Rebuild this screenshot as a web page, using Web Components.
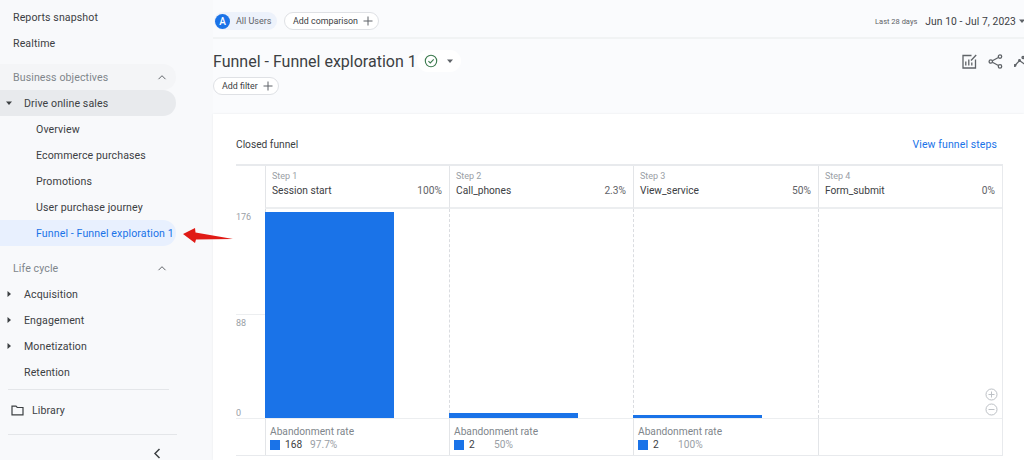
<!DOCTYPE html>
<html>
<head>
<meta charset="utf-8">
<style>
html, body { margin: 0; height: 460px; overflow: hidden; background: #fff; }
body { font-family: Roboto, "Liberation Sans", sans-serif; color: #3c4043; }
</style>
</head>
<body>
<ga-app></ga-app>

<script>
const html = String.raw

const caretDown = html`<svg width="8" height="8" viewBox="0 0 8 8"><path d="M1 2.5h6L4 6z" fill="currentColor"/></svg>`
const caretRight = html`<svg width="8" height="8" viewBox="0 0 8 8"><path d="M2.5 1v6L6 4z" fill="currentColor"/></svg>`
const plus = html`<svg width="10" height="10" viewBox="0 0 10 10"><path d="M5 .5v9M.5 5h9" stroke="#5f6368" stroke-width="1" fill="none"/></svg>`

/**
 * one row of the left menu
 */
class NavItem extends HTMLElement {
	connectedCallback() {
		const caret = this.getAttribute('caret')
		const mark = caret == 'down' ? caretDown : caret == 'right' ? caretRight : ''
		this.attachShadow({ mode: 'open' }).innerHTML = html`
			<style>
				:host {
					display: flex;
					align-items: center;
					height: 26px;
					width: 176px;
					box-sizing: border-box;
					font-size: 10.6px;
					letter-spacing: .1px;
					color: #3c4043;
					border-radius: 0 13px 13px 0;
					white-space: nowrap;
				}
				:host([level="0"]) { padding-left: 13px; }
				:host([level="1"]) { padding-left: 24px; }
				:host([level="2"]) { padding-left: 36px; }
				:host([open]) { background: #e8eaed; }
				:host([active]) { background: #e8f0fe; color: #1a73e8; }
				.caret {
					position: absolute;
					left: 5px;
					display: flex;
					color: #3c4043;
				}
			</style>
			<span class="caret">${mark}</span>
			<slot></slot>
		`
	}
}
customElements.define('nav-item', NavItem);

/**
 * grey section heading with its chevron
 */
class NavHeading extends HTMLElement {
	connectedCallback() {
		this.attachShadow({ mode: 'open' }).innerHTML = html`
			<style>
				:host {
					display: flex;
					align-items: center;
					justify-content: space-between;
					height: 26px;
					width: 176px;
					box-sizing: border-box;
					padding: 0 9px 0 13px;
					font-size: 10.6px;
					letter-spacing: .1px;
					color: #80868b;
					border-radius: 0 13px 13px 0;
				}
				:host([tint]) { background: #f4f5f7; }
				svg { display: block; }
			</style>
			<slot></slot>
			<svg width="10" height="7" viewBox="0 0 10 7"><path d="M1.5 5.2 5 1.7l3.5 3.5" stroke="#5f6368" stroke-width="1" fill="none"/></svg>
		`
	}
}
customElements.define('nav-heading', NavHeading);

class GaSidebar extends HTMLElement {
	constructor() {
		super();
		this.attachShadow({ mode: 'open' }).innerHTML = html`
			<style>
				:host {
					display: flex;
					flex-direction: column;
					width: 213px;
					height: 460px;
					flex: none;
					box-sizing: border-box;
					padding-top: 4px;
					background: #f8f9fb;
					position: relative;
				}
				.gap-a { height: 8px; }
				.gap-b { height: 9px; }
				hr {
					border: 0;
					border-top: 1px solid #e4e6e9;
					margin: 4px 0 0 8px;
					width: 161px;
				}
				.library {
					display: flex;
					align-items: center;
					gap: 8px;
					height: 44px;
					box-sizing: border-box;
					padding: 0 0 4px 11px;
					font-size: 10.6px;
					letter-spacing: .1px;
				}
				.collapse {
					display: flex;
					justify-content: flex-end;
					width: 161px;
					padding-top: 13px;
				}
			</style>
			<nav-item level="0">Reports snapshot</nav-item>
			<nav-item level="0">Realtime</nav-item>
			<div class="gap-a"></div>
			<nav-heading tint>Business objectives</nav-heading>
			<nav-item level="1" caret="down" open>Drive online sales</nav-item>
			<nav-item level="2">Overview</nav-item>
			<nav-item level="2">Ecommerce purchases</nav-item>
			<nav-item level="2">Promotions</nav-item>
			<nav-item level="2">User purchase journey</nav-item>
			<nav-item level="2" active>Funnel - Funnel exploration 1</nav-item>
			<div class="gap-b"></div>
			<nav-heading>Life cycle</nav-heading>
			<nav-item level="1" caret="right">Acquisition</nav-item>
			<nav-item level="1" caret="right">Engagement</nav-item>
			<nav-item level="1" caret="right">Monetization</nav-item>
			<nav-item level="1">Retention</nav-item>
			<hr>
			<div class="library">
				<svg width="13" height="11" viewBox="0 0 13 11"><path d="M1 1.2h4l1.2 1.3H12v7.3H1z" stroke="#3c4043" stroke-width="1.2" fill="none"/></svg>
				<span>Library</span>
			</div>
			<hr style="width:169px;margin-top:0">
			<div class="collapse">
				<svg width="8" height="11" viewBox="0 0 8 11"><path d="M6.5 1 2 5.5 6.5 10" stroke="#3c4043" stroke-width="1.5" fill="none"/></svg>
			</div>
		`
	}
}
customElements.define('ga-sidebar', GaSidebar);

/**
 * rounded outline chip, used for the add buttons
 */
class GaChip extends HTMLElement {
	constructor() {
		super();
		this.attachShadow({ mode: 'open' }).innerHTML = html`
			<style>
				:host {
					display: inline-flex;
					align-items: center;
					gap: 5px;
					height: 18px;
					box-sizing: border-box;
					padding: 0 5px 0 8px;
					border: 1px solid #dfe1e5;
					border-radius: 9px;
					background: #fff;
					font-size: 8.9px;
					color: #3c4043;
					white-space: nowrap;
				}
				svg { display: block; }
			</style>
			<slot></slot>
			${plus}
		`
	}
}
customElements.define('ga-chip', GaChip);

class GaTopbar extends HTMLElement {
	constructor() {
		super();
		this.attachShadow({ mode: 'open' }).innerHTML = html`
			<style>
				:host {
					display: flex;
					align-items: center;
					height: 39px;
					box-sizing: border-box;
					border-bottom: 2px solid #f1f3f4;
					padding: 5px 0 0 1px;
					background: #fafbfd;
				}
				.segment {
					display: flex;
					align-items: center;
					gap: 6px;
					height: 18px;
					width: 63px;
					box-sizing: border-box;
					border-radius: 9px;
					background: #edf2fb;
					font-size: 9px;
					color: #5f6368;
					margin-right: 7px;
				}
				.badge {
					width: 15px;
					height: 15px;
					border-radius: 50%;
					background: #1a73e8;
					color: #fff;
					font-size: 10px;
					font-weight: 500;
					display: flex;
					align-items: center;
					justify-content: center;
					margin-left: 1px;
				}
				.dates {
					margin-left: auto;
					display: flex;
					align-items: center;
					font-size: 10.3px;
					letter-spacing: .08px;
					color: #3c4043;
					white-space: nowrap;
				}
				.dates small {
					font-size: 7.5px;
					letter-spacing: 0;
					color: #5f6368;
					margin-right: 8px;
				}
				.dates svg { margin-left: 2px; margin-right: -2px; display: block; color: #5f6368; }
			</style>
			<div class="segment"><span class="badge">A</span><span>All Users</span></div>
			<ga-chip>Add comparison</ga-chip>
			<div class="dates"><small>Last 28 days</small>Jun 10 - Jul 7, 2023${caretDown}</div>
		`
	}
}
customElements.define('ga-topbar', GaTopbar);

class GaTitle extends HTMLElement {
	constructor() {
		super();
		this.attachShadow({ mode: 'open' }).innerHTML = html`
			<style>
				:host {
					display: block;
					height: 75px;
					box-sizing: border-box;
					background: #fafbfd;
					padding-top: 10px;
				}
				.line {
					display: flex;
					align-items: center;
					height: 24px;
				}
				h1 {
					margin: 0;
					font-size: 16px;
					font-weight: 400;
					color: #3c4043;
					white-space: nowrap;
				}
				.status {
					display: flex;
					align-items: center;
					gap: 8px;
					padding: 0 7px 0 7px;
					height: 22px;
					border-radius: 11px;
					background: #fff;
					color: #5f6368;
				}
				.tools {
					margin-left: auto;
					display: flex;
					align-items: center;
					gap: 11px;
					margin-right: -2px;
				}
				svg { display: block; }
				ga-chip { margin-top: 4px; }
			</style>
			<div class="line">
				<h1>Funnel - Funnel exploration 1</h1>
				<div class="status">
					<svg width="14" height="14" viewBox="0 0 14 14"><circle cx="7" cy="7" r="5.7" stroke="#3c7a4e" stroke-width="1.1" fill="none"/><path d="M4.4 7.2 6.3 9l3.4-3.6" stroke="#3c7a4e" stroke-width="1.1" fill="none"/></svg>
					${caretDown}
				</div>
				<div class="tools">
					<svg width="15" height="15" viewBox="0 0 15 15" fill="none" stroke="#5f6368" stroke-width="1.3"><path d="M9.5 1.5H1v12.5h12.5V5.5"/><path d="M3.8 11.5V7.5M6.8 11.5V5.5M9.8 11.5V8.5"/><path d="M9 6.5 14.2 1"/></svg>
					<svg width="15" height="15" viewBox="0 0 15 15" fill="none" stroke="#5f6368" stroke-width="1.3"><circle cx="2.8" cy="7.5" r="1.7"/><circle cx="12" cy="2.6" r="1.7"/><circle cx="12" cy="12.4" r="1.7"/><path d="M4.4 6.7 10.4 3.5M4.4 8.3l6 3.2"/></svg>
					<svg width="12" height="15" viewBox="0 0 12 15" fill="none" stroke="#5f6368" stroke-width="1.3"><path d="M1 11.5 5.5 6.5 11 10.5"/><circle cx="1" cy="11.5" r=".8"/><circle cx="5.5" cy="6.5" r=".8"/><circle cx="9" cy="3.5" r="1"/></svg>
				</div>
			</div>
			<ga-chip>Add filter</ga-chip>
		`
	}
}
customElements.define('ga-title', GaTitle);

/**
 * header cell of the funnel table
 */
class FunnelStep extends HTMLElement {
	connectedCallback() {
		this.attachShadow({ mode: 'open' }).innerHTML = html`
			<style>
				:host {
					display: flex;
					flex-direction: column;
					gap: 4px;
					box-sizing: border-box;
					padding: 5px 7px 0 6px;
					border-left: 1px solid #e3e5e8;
					font-size: 10.2px;
					color: #3c4043;
					white-space: nowrap;
				}
				.num { font-size: 9px; color: #9aa0a6; }
				.row { display: flex; justify-content: space-between; }
				.pct { color: #5f6368; }
			</style>
			<div class="num">${this.getAttribute('num')}</div>
			<div class="row"><span>${this.getAttribute('name')}</span><span class="pct">${this.getAttribute('pct')}</span></div>
		`
	}
}
customElements.define('funnel-step', FunnelStep);

/**
 * plot column with one blue bar standing on the base line
 */
class FunnelBar extends HTMLElement {
	connectedCallback() {
		this.attachShadow({ mode: 'open' }).innerHTML = html`
			<style>
				:host {
					display: flex;
					align-items: flex-end;
					box-sizing: border-box;
					border-left: 1px dashed #dadce0;
				}
				div {
					width: 129px;
					margin-left: -1px;
					height: ${this.getAttribute('height')}px;
					background: #1a73e8;
				}
			</style>
			<div></div>
		`
	}
}
customElements.define('funnel-bar', FunnelBar);

/**
 * abandonment cell under a bar
 */
class FunnelDrop extends HTMLElement {
	connectedCallback() {
		const count = this.getAttribute('count')
		this.attachShadow({ mode: 'open' }).innerHTML = count ? html`
			<style>
				:host {
					display: block;
					box-sizing: border-box;
					padding: 7px 0 0 4px;
					border-left: 1px solid #e3e5e8;
					font-size: 10.2px;
					line-height: 12px;
					color: #80868b;
					white-space: nowrap;
				}
				.row {
					display: flex;
					align-items: center;
					margin-top: 1px;
				}
				i {
					width: 10px;
					height: 10px;
					background: #1a73e8;
					margin-right: 5px;
				}
				b {
					font-weight: 400;
					color: #3c4043;
					width: 25px;
				}
				span { color: #9aa0a6; }
			</style>
			<div>Abandonment rate</div>
			<div class="row"><i></i><b>${count}</b><span>${this.getAttribute('pct')}</span></div>
		` : html`
			<style>
				:host { display: block; border-left: 1px solid #e3e5e8; }
			</style>
		`
	}
}
customElements.define('funnel-drop', FunnelDrop);

class FunnelCard extends HTMLElement {
	constructor() {
		super();
		this.attachShadow({ mode: 'open' }).innerHTML = html`
			<style>
				:host {
					display: block;
					height: 346px;
					box-sizing: border-box;
					padding: 0 21px 0 23px;
					background: #fff;
					position: relative;
					box-shadow: 0 0 2px #e8eaed;
				}
				.head {
					display: flex;
					justify-content: space-between;
					align-items: center;
					height: 50px;
					box-sizing: border-box;
					padding: 10px 6px 0 0;
					font-size: 10.2px;
					color: #3c4043;
				}
				.head a { color: #1a73e8; font-size: 10.5px; letter-spacing: .1px; }
				.table {
					display: grid;
					grid-template-columns: 29px 184px 184px 185px 184px;
					grid-template-rows: 43px 209px 37px;
					border-top: 2px solid #e8eaed;
					border-bottom: 1px solid #e8eaed;
					border-right: 1px solid #e8eaed;
				}
				funnel-step { border-bottom: 2px solid #eceef0; }
				funnel-drop { border-top: 1px solid #eceef0; }
				.axis {
					grid-row: 2;
					display: flex;
					flex-direction: column;
					font-size: 9px;
					color: #9aa0a6;
				}
				.axis .top { height: 105px; padding-top: 3px; box-sizing: border-box; }
				.axis .mid { border-top: 1px solid #eceef0; padding-top: 3px; }
				.axis .low { margin-top: auto; padding-bottom: 0; }
				.blank { grid-row: 1; grid-column: 1; }
				.base { grid-row: 3; grid-column: 1; border-top: 1px solid #eceef0; }
				.zoom {
					position: absolute;
					right: 26px;
					top: 274px;
					display: flex;
					flex-direction: column;
					gap: 2px;
				}
				svg { display: block; }
			</style>
			<div class="head"><span>Closed funnel</span><a>View funnel steps</a></div>
			<div class="table">
				<div class="blank"></div>
				<funnel-step num="Step 1" name="Session start" pct="100%"></funnel-step>
				<funnel-step num="Step 2" name="Call_phones" pct="2.3%"></funnel-step>
				<funnel-step num="Step 3" name="View_service" pct="50%"></funnel-step>
				<funnel-step num="Step 4" name="Form_submit" pct="0%"></funnel-step>
				<div class="axis"><div class="top">176</div><div class="mid">88</div><div class="low">0</div></div>
				<funnel-bar height="206"></funnel-bar>
				<funnel-bar height="5"></funnel-bar>
				<funnel-bar height="3"></funnel-bar>
				<funnel-bar height="0"></funnel-bar>
				<div class="base"></div>
				<funnel-drop count="168" pct="97.7%"></funnel-drop>
				<funnel-drop count="2" pct="50%"></funnel-drop>
				<funnel-drop count="2" pct="100%"></funnel-drop>
				<funnel-drop></funnel-drop>
			</div>
			<div class="zoom">
				<svg width="13" height="13" viewBox="0 0 13 13" fill="none" stroke="#bdc1c6"><circle cx="6.5" cy="6.5" r="5.5"/><path d="M6.5 3.5v6M3.5 6.5h6"/></svg>
				<svg width="13" height="13" viewBox="0 0 13 13" fill="none" stroke="#bdc1c6"><circle cx="6.5" cy="6.5" r="5.5"/><path d="M3.5 6.5h6"/></svg>
			</div>
		`
	}
}
customElements.define('funnel-card', FunnelCard);

class GaApp extends HTMLElement {
	constructor() {
		super();
		this.attachShadow({ mode: 'open' }).innerHTML = html`
			<style>
				:host {
					display: flex;
					width: 1024px;
					height: 460px;
					overflow: hidden;
					position: relative;
				}
				main {
					flex: 1;
					min-width: 0;
					display: flex;
					flex-direction: column;
				}
				.arrow {
					position: absolute;
					left: 182px;
					top: 226px;
				}
			</style>
			<ga-sidebar></ga-sidebar>
			<main>
				<ga-topbar></ga-topbar>
				<ga-title></ga-title>
				<funnel-card></funnel-card>
			</main>
			<svg class="arrow" width="54" height="20" viewBox="0 0 54 20"><path d="M1 8 13 2l.5 4.5L51 13l-37 .5L13 17z" fill="#e01b16"/></svg>
		`
	}
}
customElements.define('ga-app', GaApp);
</script>
</body>
</html>
